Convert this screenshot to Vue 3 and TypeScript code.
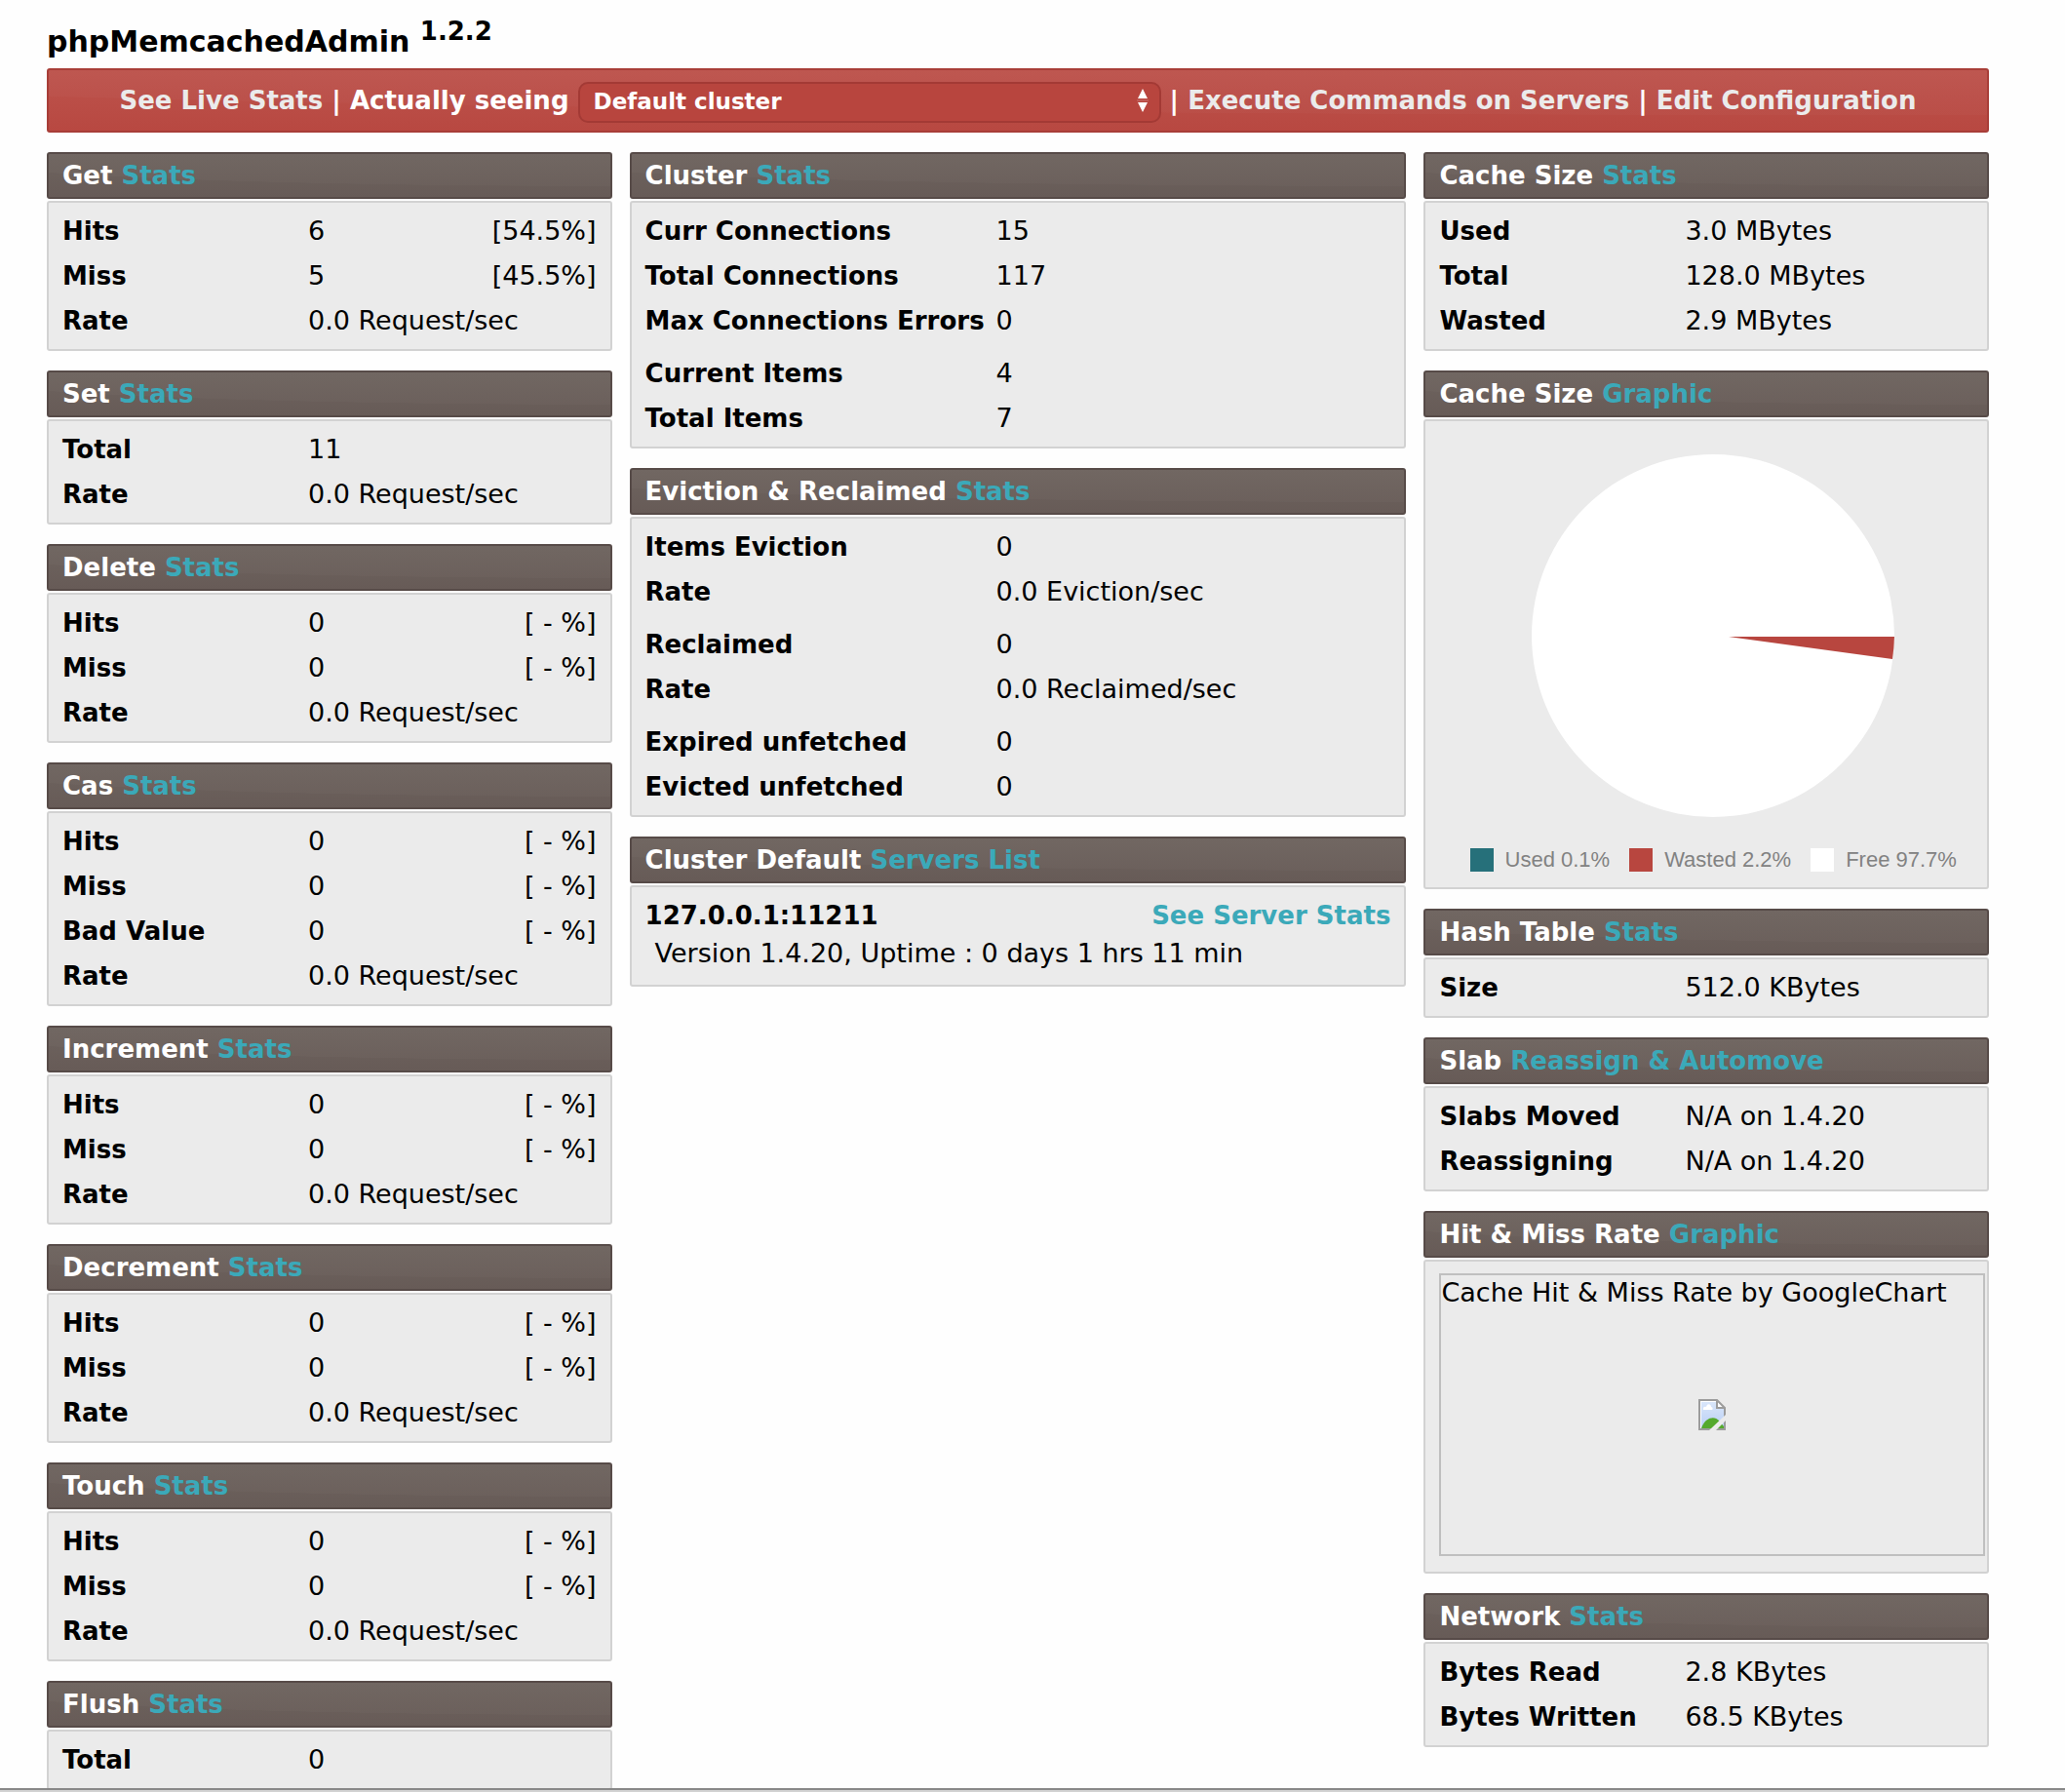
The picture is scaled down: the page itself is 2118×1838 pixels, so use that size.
<script setup lang="ts">
import { ref } from 'vue'

interface Row {
  label: string
  value: string
  percent?: string
}

interface Panel {
  title: string
  accent: string
  kind: 'rows' | 'servers' | 'pie' | 'image'
  wide?: boolean
  groups?: Row[][]
}

const row = (label: string, value: string, percent?: string): Row => ({ label, value, percent })
const rate = row('Rate', '0.0 Request/sec')
const none = '[ - %]'

const statPanel = (title: string, rows: Row[]): Panel => ({
  title,
  accent: 'Stats',
  kind: 'rows',
  groups: [rows],
})

const emptyHits = (title: string): Panel =>
  statPanel(title, [row('Hits', '0', none), row('Miss', '0', none), rate])

const columns: Panel[][] = [
  [
    statPanel('Get', [row('Hits', '6', '[54.5%]'), row('Miss', '5', '[45.5%]'), rate]),
    statPanel('Set', [row('Total', '11'), rate]),
    emptyHits('Delete'),
    statPanel('Cas', [
      row('Hits', '0', none),
      row('Miss', '0', none),
      row('Bad Value', '0', none),
      rate,
    ]),
    emptyHits('Increment'),
    emptyHits('Decrement'),
    emptyHits('Touch'),
    statPanel('Flush', [row('Total', '0')]),
  ],
  [
    {
      title: 'Cluster',
      accent: 'Stats',
      kind: 'rows',
      wide: true,
      groups: [
        [
          row('Curr Connections', '15'),
          row('Total Connections', '117'),
          row('Max Connections Errors', '0'),
        ],
        [row('Current Items', '4'), row('Total Items', '7')],
      ],
    },
    {
      title: 'Eviction & Reclaimed',
      accent: 'Stats',
      kind: 'rows',
      wide: true,
      groups: [
        [row('Items Eviction', '0'), row('Rate', '0.0 Eviction/sec')],
        [row('Reclaimed', '0'), row('Rate', '0.0 Reclaimed/sec')],
        [row('Expired unfetched', '0'), row('Evicted unfetched', '0')],
      ],
    },
    { title: 'Cluster Default', accent: 'Servers List', kind: 'servers' },
  ],
  [
    statPanel('Cache Size', [
      row('Used', '3.0 MBytes'),
      row('Total', '128.0 MBytes'),
      row('Wasted', '2.9 MBytes'),
    ]),
    { title: 'Cache Size', accent: 'Graphic', kind: 'pie' },
    statPanel('Hash Table', [row('Size', '512.0 KBytes')]),
    {
      title: 'Slab',
      accent: 'Reassign & Automove',
      kind: 'rows',
      groups: [[row('Slabs Moved', 'N/A on 1.4.20'), row('Reassigning', 'N/A on 1.4.20')]],
    },
    { title: 'Hit & Miss Rate', accent: 'Graphic', kind: 'image' },
    statPanel('Network', [row('Bytes Read', '2.8 KBytes'), row('Bytes Written', '68.5 KBytes')]),
  ],
]

const legend = [
  { name: 'used', text: 'Used 0.1%' },
  { name: 'wasted', text: 'Wasted 2.2%' },
  { name: 'free', text: 'Free 97.7%' },
]

const cluster = ref('Default')
</script>

<template>
  <div class="page">
    <div class="content">
      <h1 class="brand">phpMemcachedAdmin <sup>1.2.2</sup></h1>

      <nav class="bar">
        <a href="#live">See Live Stats</a> | <label for="cluster">Actually seeing</label>&#32;<span class="picker">
          <select id="cluster" v-model="cluster">
            <option value="Default">Default cluster</option>
          </select>
          <svg class="arrows" viewBox="0 0 12 24" aria-hidden="true">
            <path d="M6 0 L11 10 H1 Z M6 24 L11 14 H1 Z" fill="#fff" />
            <path d="M0 12 H12" stroke="#c8736e" stroke-width="1" />
          </svg>
        </span>
        | <a href="#commands">Execute Commands on Servers</a> |
        <a href="#configuration">Edit Configuration</a>
      </nav>

      <main class="columns">
        <div v-for="(panels, c) in columns" :key="c" class="column">
          <section v-for="panel in panels" :key="panel.title + panel.accent" class="panel">
            <h2 class="head">
              {{ panel.title }} <span class="accent">{{ panel.accent }}</span>
            </h2>

            <div v-if="panel.kind === 'rows'" class="body">
              <table :class="{ wide: panel.wide }">
                <tbody v-for="(group, g) in panel.groups" :key="g">
                  <tr v-for="(item, i) in group" :key="i">
                    <th scope="row">{{ item.label }}</th>
                    <td :colspan="item.percent ? 1 : 2">{{ item.value }}</td>
                    <td v-if="item.percent" class="percent">{{ item.percent }}</td>
                  </tr>
                </tbody>
              </table>
            </div>

            <div v-else-if="panel.kind === 'servers'" class="body servers">
              <div class="server">
                <strong>127.0.0.1:11211</strong>
                <a class="accent" href="#server">See Server Stats</a>
              </div>
              <p class="version">Version 1.4.20, Uptime : 0 days 1 hrs 11 min</p>
            </div>

            <div v-else-if="panel.kind === 'pie'" class="body chart">
              <svg class="pie" viewBox="0 0 372 372" role="img" aria-label="Cache size">
                <circle cx="186" cy="186" r="186" fill="#fff" />
                <path d="M202 187 H372 A186 186 0 0 1 370 210 Z" fill="#b8463f" />
              </svg>
              <ul class="legend">
                <li v-for="entry in legend" :key="entry.name">
                  <span class="swatch" :class="entry.name"></span>{{ entry.text }}
                </li>
              </ul>
            </div>

            <div v-else class="body frame-body">
              <div class="frame">
                <p>Cache Hit &amp; Miss Rate by GoogleChart</p>
                <svg class="broken" viewBox="0 0 28 32" aria-hidden="true">
                  <defs>
                    <linearGradient id="sky" x1="0" y1="0" x2="0" y2="1">
                      <stop offset="0" stop-color="#d9e6fa" />
                      <stop offset="1" stop-color="#b9cff5" />
                    </linearGradient>
                  </defs>
                  <path d="M1 1 H19 L27 9 V31 H1 Z" fill="#fff" />
                  <path d="M3 3 H18 V10 H26 V30 H3 Z" fill="url(#sky)" />
                  <path
                    d="M5 11 C4 8 7 7 8 8 C9 4 13 5 13 8 C15 8 15 11 14 11 Z"
                    fill="#fff"
                  />
                  <path d="M3 30 C7 18 17 17 21 22 L26 28 V30 Z" fill="#54a92c" />
                  <path
                    d="M1 1 H19 L27 9 V31 H1 Z M19 1 V9 H27"
                    fill="none"
                    stroke="#9c9c9c"
                    stroke-width="2"
                  />
                  <path d="M11 32 L28 16 V22 L18 32 Z" fill="#ebebeb" />
                </svg>
              </div>
            </div>
          </section>
        </div>
      </main>
    </div>
    <footer class="edge"></footer>
  </div>
</template>

<style>
body {
  margin: 0;
  background: #fefefe;
}
</style>

<style scoped>
.page {
  display: flex;
  flex-direction: column;
  height: 100vh;
  overflow: hidden;
  color: #000;
  font-family: Verdana, 'DejaVu Sans', sans-serif;
  font-size: 26px;
}

.content {
  flex: 1;
  min-height: 0;
  overflow: hidden;
  padding: 0 78px 0 48px;
}

.edge {
  flex: none;
  height: 2px;
  border-top: 2px solid #888;
  background: #d2d2d2;
}

.brand {
  height: 70px;
  margin: 0;
  font-size: 30px;
  line-height: 86px;
}

.brand sup {
  font-size: 26px;
  line-height: 0;
  vertical-align: 12px;
}

.bar {
  box-sizing: border-box;
  height: 66px;
  border: 2px solid #a83e38;
  border-radius: 3px;
  background:
    radial-gradient(120% 70% at 100% 5%, rgba(255, 255, 255, 0.02) 99%, transparent 100%),
    linear-gradient(#bd544d, #b84841);
  color: #fff;
  font-weight: bold;
  line-height: 62px;
  text-align: center;
  white-space: nowrap;
}

.bar a {
  color: #ebebeb;
  text-decoration: none;
}

.picker {
  position: relative;
  display: inline-block;
}

.picker select {
  appearance: none;
  box-sizing: border-box;
  width: 598px;
  height: 42px;
  padding: 0 40px 2px 14px;
  border: 2px solid #a33a35;
  border-radius: 10px;
  background: #b8453e;
  color: #fff;
  font: bold 23px Verdana, 'DejaVu Sans', sans-serif;
  vertical-align: middle;
}

.arrows {
  position: absolute;
  top: 50%;
  right: 13px;
  width: 12px;
  height: 24px;
  margin-top: -12px;
}

.columns {
  display: grid;
  grid-template-columns: 8fr 11fr 8fr;
  align-items: start;
  gap: 18px;
  padding-top: 20px;
}

.column {
  display: flex;
  flex-direction: column;
  gap: 20px;
  min-width: 0;
}

.panel {
  display: flex;
  flex-direction: column;
  gap: 2px;
}

.head {
  margin: 0;
  padding: 0 14px;
  border: 2px solid #574b48;
  border-radius: 3px;
  background:
    radial-gradient(120% 70% at 100% 5%, rgba(255, 255, 255, 0.02) 99%, transparent 100%),
    linear-gradient(#6e645f, #675b57);
  color: #fff;
  font-size: 26px;
  line-height: 44px;
  white-space: nowrap;
}

.accent {
  color: #3ba9b9;
  text-decoration: none;
}

.body {
  padding: 6px 14px;
  border: 2px solid #d2d2d2;
  border-radius: 3px;
  background: #ebebeb;
}

table {
  width: 100%;
  border-collapse: collapse;
  table-layout: fixed;
}

tbody + tbody::before {
  content: '';
  display: block;
  height: 8px;
}

th,
td {
  height: 46px;
  padding: 0;
  line-height: 46px;
  text-align: left;
  vertical-align: middle;
  white-space: nowrap;
}

th {
  width: 252px;
}

.wide th {
  width: 360px;
}

td.percent {
  text-align: right;
}

.servers {
  padding-bottom: 16px;
}

.server {
  display: flex;
  justify-content: space-between;
  font-weight: bold;
  line-height: 46px;
}

.version {
  margin: 0;
  padding-left: 10px;
  line-height: 32px;
}

td,
.version,
.frame p {
  font-size: 27px;
}

.chart {
  display: flex;
  flex-direction: column;
  align-items: center;
  gap: 32px;
  padding: 34px 0 16px 14px;
}

.pie {
  width: 372px;
  height: 372px;
}

.legend {
  display: flex;
  gap: 20px;
  margin: 0;
  padding: 0;
  color: #828282;
  font-family: 'Liberation Sans', Arial, sans-serif;
  font-size: 22px;
  line-height: 24px;
  list-style: none;
}

.legend li {
  display: flex;
  gap: 12px;
  white-space: nowrap;
}

.swatch {
  width: 24px;
  height: 24px;
}

.used {
  background: #26707a;
}

.wasted {
  background: #b8463f;
}

.free {
  background: #fff;
}

.frame-body {
  padding: 12px 2px 16px 14px;
}

.frame {
  display: grid;
  box-sizing: border-box;
  height: 290px;
  border: 2px solid #bfbfbf;
}

.frame p,
.broken {
  grid-area: 1 / 1;
}

.frame p {
  margin: 0;
  line-height: 36px;
  white-space: nowrap;
}

.broken {
  width: 28px;
  height: 32px;
  place-self: center;
}
</style>
